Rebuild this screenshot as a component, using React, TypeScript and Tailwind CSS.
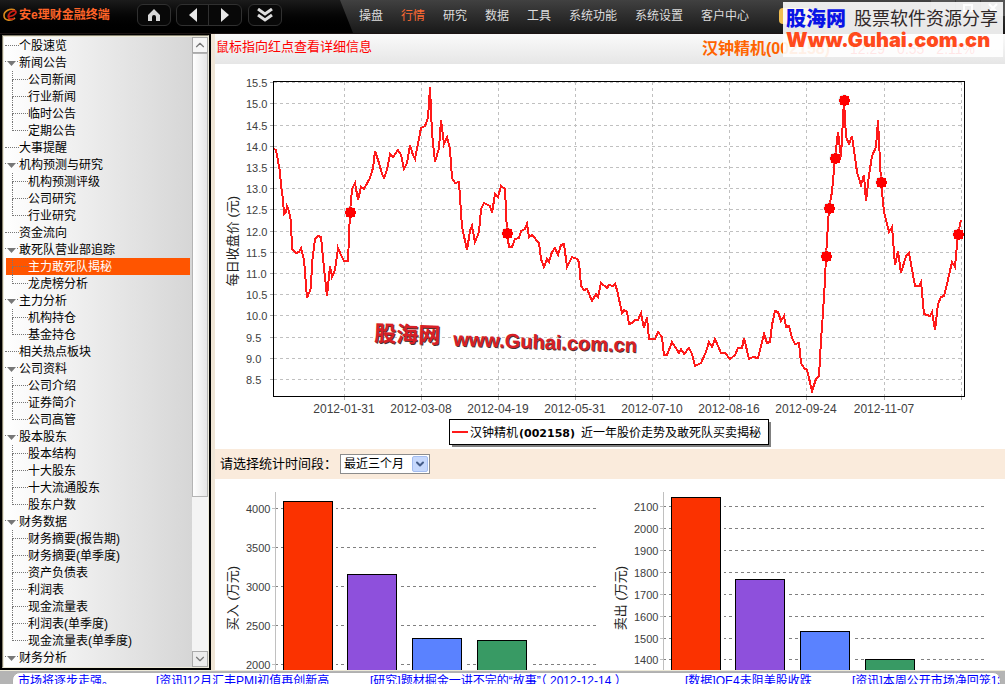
import type { ReactNode } from 'react'
import { ChevronDown, ChevronUp } from 'lucide-react'

interface TreeNode {
  label: string
  children?: string[]
}

const TREE: TreeNode[] = [
  { label: '个股速览' },
  { label: '新闻公告', children: ['公司新闻', '行业新闻', '临时公告', '定期公告'] },
  { label: '大事提醒' },
  { label: '机构预测与研究', children: ['机构预测评级', '公司研究', '行业研究'] },
  { label: '资金流向' },
  { label: '敢死队营业部追踪', children: ['主力敢死队揭秘', '龙虎榜分析'] },
  { label: '主力分析', children: ['机构持仓', '基金持仓'] },
  { label: '相关热点板块' },
  { label: '公司资料', children: ['公司介绍', '证券简介', '公司高管'] },
  { label: '股本股东', children: ['股本结构', '十大股东', '十大流通股东', '股东户数'] },
  {
    label: '财务数据',
    children: ['财务摘要(报告期)', '财务摘要(单季度)', '资产负债表', '利润表', '现金流量表', '利润表(单季度)', '现金流量表(单季度)'],
  },
  { label: '财务分析', children: [] },
]

const MENU = ['操盘', '行情', '研究', '数据', '工具', '系统功能', '系统设置', '客户中心']

const NEWS = [
  { text: '市场将逐步走强。', width: 'w-[138px]' },
  { text: '[资讯]12月汇丰PMI初值再创新高', width: 'w-[214px]' },
  { text: '[研究]题材掘金一讲不完的“故事”（ 2012-12-14 ）', width: 'w-[315px]' },
  { text: '[数据]QE4未阻美股收跌', width: 'w-[167px]' },
  { text: '[资讯]本周公开市场净回笼1320亿元', width: 'w-[200px]' },
]

// Chart coordinates, relative to the top left corner of the price chart
const PRICE_LINE =
  '59,85 61,86 65,108 66,121 68,136 69,150 71,148 72,142 74,147 76,158 77,185 81,189 84,188 86,184 89,196 92,234 96,224 97,199 100,175 103,172 106,173 109,204 112,232 115,202 117,213 120,206 123,184 126,191 129,197 133,197 135,148 137,125 140,119 143,136 146,123 149,125 155,114 158,104 160,87 164,99 167,110 169,114 172,106 175,90 178,93 183,86 186,91 189,105 192,99 195,81 198,91 200,95 206,64 210,62 213,54 215,23 217,69 220,98 224,84 226,56 229,80 232,73 235,85 237,114 240,119 244,118 247,163 252,186 255,167 257,162 260,178 264,168 266,145 269,139 275,142 277,149 280,130 283,133 286,122 290,125 292,169 294,183 297,183 300,175 304,174 306,167 310,165 312,160 314,173 317,171 324,179 326,195 329,203 332,195 334,198 337,188 340,184 343,191 346,181 349,180 352,203 355,197 357,193 362,195 364,198 366,222 369,226 372,225 377,237 381,230 383,233 386,219 392,224 394,221 398,222 400,220 402,226 407,249 409,246 412,248 414,260 417,259 420,256 423,256 426,249 429,264 432,253 434,275 440,275 443,268 447,273 449,291 452,291 457,278 464,289 466,285 469,290 474,284 477,290 480,302 486,299 491,288 494,278 497,283 500,275 506,289 510,289 515,295 520,291 523,284 527,284 529,274 534,295 538,293 543,294 547,278 549,270 552,279 555,278 557,261 560,247 563,248 566,257 569,252 571,263 574,262 577,274 580,280 584,279 586,299 589,304 592,306 597,327 601,315 604,312 606,276 608,249 610,216 611,192 614,144 617,128 620,94 623,68 626,93 629,36 631,73 634,80 637,72 642,108 646,121 649,111 651,137 654,111 657,92 661,83 663,56 666,118 669,148 674,168 677,163 680,201 683,187 686,209 691,192 694,189 700,222 704,222 706,218 709,250 715,252 717,248 720,266 723,240 726,233 729,232 732,220 737,198 740,203 743,170 746,156'

const MARKERS = [[135, 148], [292, 169], [611, 192], [614, 144], [620, 94], [629, 36], [666, 118], [743, 170]]

const PRICE_TICKS = [
  { label: '15.5', y: 18 },
  { label: '15.0', y: 39 },
  { label: '14.5', y: 61 },
  { label: '14.0', y: 82 },
  { label: '13.5', y: 103 },
  { label: '13.0', y: 124 },
  { label: '12.5', y: 145 },
  { label: '12.0', y: 167 },
  { label: '11.5', y: 188 },
  { label: '11.0', y: 209 },
  { label: '10.5', y: 230 },
  { label: '10.0', y: 251 },
  { label: '9.5', y: 273 },
  { label: '9.0', y: 294 },
  { label: '8.5', y: 315 },
]

const DATE_TICKS = [
  { label: '2012-01-31', x: 129 },
  { label: '2012-03-08', x: 206 },
  { label: '2012-04-19', x: 283 },
  { label: '2012-05-31', x: 360 },
  { label: '2012-07-10', x: 437 },
  { label: '2012-08-16', x: 514 },
  { label: '2012-09-24', x: 591 },
  { label: '2012-11-07', x: 669 },
  { label: '', x: 746 },
]

const BAR_COLORS = ['#fb3200', '#8e50dc', '#5a82ff', '#389a64']

function LogoMark() {
  return (
    <svg viewBox="0 0 16 16" className="h-4 w-4" aria-hidden="true">
      <path d="M12 3C7 1 1 4 1 8.500c0 5 6 6 11 2.500" fill="none" stroke="#d98a1c" strokeWidth="1.600" />
      <path d="M5 9.500c4 0 8-2 8-4.200 0-3-6-1.300-7.500 2.700C4.500 12 8 13 11 11.500" fill="none" stroke="#c81e14" strokeWidth="1.800" />
    </svg>
  )
}

function ToolButton({ label, className = '', children }: { label: string; className?: string; children: ReactNode }) {
  return (
    <button type="button" aria-label={label} className={`flex h-5 w-8 items-center justify-center ${className}`}>
      {children}
    </button>
  )
}

function Header() {
  return (
    <header className="flex h-[34px] shrink-0 border-b border-[#1c1414] bg-gradient-to-b from-[#1b1b1b] via-[#050505] to-black">
      <div className="flex w-[340px] shrink-0 items-center pb-[3px] pl-[3px]">
        <LogoMark />
        <span className="w-[118px] whitespace-nowrap text-xs font-bold text-[#ff6428]">安e理财金融终端</span>
        <div className="rounded-md border border-[#303030] bg-[#080808]">
          <ToolButton label="首页">
            <svg viewBox="0 0 14 13" className="h-[13px] w-3.5">
              <path d="M7 0 13 6v6H9V8a2 2 0 0 0-4 0v4H1V6z" fill="#d8d8d8" />
            </svg>
          </ToolButton>
        </div>
        <div className="ml-[5px] flex rounded-md border border-[#303030] bg-[#080808]">
          <ToolButton label="后退" className="border-r border-[#303030]">
            <svg viewBox="0 0 8 14" className="h-3.5 w-2">
              <path d="M8 0v14L0 7z" fill="#e8e8e8" />
            </svg>
          </ToolButton>
          <ToolButton label="前进">
            <svg viewBox="0 0 8 14" className="h-3.5 w-2">
              <path d="M0 0v14l8-7z" fill="#e8e8e8" />
            </svg>
          </ToolButton>
        </div>
        <div className="ml-[6px] rounded-md border border-[#303030] bg-[#080808]">
          <ToolButton label="展开">
            <svg viewBox="0 0 16 14" className="h-3.5 w-4" fill="none" stroke="#dedede" strokeWidth="3">
              <path d="M1 1l7 5 7-5M1 7l7 5 7-5" />
            </svg>
          </ToolButton>
        </div>
      </div>
      <nav className="flex min-w-0 flex-1 items-center bg-gradient-to-b from-[#414141] to-[#191919] pb-[2px] pl-[10px] [clip-path:polygon(0_0,100%_0,100%_100%,13px_100%)]">
        {MENU.map(item => (
          <a key={item} href="#" className={`whitespace-nowrap px-[9px] text-xs ${item === '行情' ? 'text-[#ff6a32]' : 'text-[#dcdcdc]'}`}>
            {item}
          </a>
        ))}
        <button type="button" aria-label="交易" className="ml-[21px] h-4 w-8 rounded-sm bg-[#f0bd50]" />
        <div className="mb-4 ml-auto flex gap-px">
          <button type="button" aria-label="最小化" className="h-4 w-6 bg-[#555]" />
          <button type="button" aria-label="最大化" className="flex h-4 w-6 items-center justify-center bg-[#555]">
            <span className="h-2 w-2.5 border-2 border-white" />
          </button>
          <button type="button" aria-label="关闭" className="flex h-4 w-6 items-center justify-center bg-[#555]">
            <svg viewBox="0 0 10 10" className="h-2.5 w-2.5" stroke="#fff" strokeWidth="2">
              <path d="M1 1l8 8M9 1 1 9" />
            </svg>
          </button>
        </div>
      </nav>
    </header>
  )
}

function Branch({ last }: { last: boolean }) {
  return (
    <span className="flex w-4 shrink-0 flex-col self-stretch">
      <span className="h-[9px] border-b border-l border-dotted border-[#777]" />
      <span className={`flex-1 border-dotted border-[#777] ${last ? '' : 'border-l'}`} />
    </span>
  )
}

function Sidebar() {
  return (
    <aside className="flex w-[211px] shrink-0 border-2 border-t border-black bg-[#ece9d8]">
      <div className="flex min-w-0 flex-1 border border-[#85806e] border-b-[#ece9d8] border-r-[#ece9d8] pt-px pl-px">
        <ul className="min-w-0 flex-1 overflow-hidden bg-gradient-to-r from-white to-[#d6d6d6] pl-px text-xs leading-[19px] text-black">
          {TREE.map(node => (
            <li key={node.label}>
              <button type="button" className="flex h-[17px] w-full items-center whitespace-nowrap">
                {node.children ? (
                  <svg viewBox="0 0 14 8" className="h-2 w-3.5 shrink-0">
                    <path d="M2 2h9L6.500 7z" fill="#777" />
                    <path d="M0 2.500h1M12 2.500h1" stroke="#777" />
                  </svg>
                ) : (
                  <span className="w-3.5 shrink-0 border-b border-dotted border-[#777]" />
                )}
                <span className="pt-px">{node.label}</span>
              </button>
              {node.children && (
                <ul className="mr-0.5 pl-px">
                  {node.children.map((child, i) => (
                    <li key={child}>
                      <button
                        type="button"
                        className={`flex h-[17px] w-full items-center whitespace-nowrap pl-1.5 ${child === '主力敢死队揭秘' ? 'bg-[#ff5500] text-white' : ''}`}
                      >
                        <Branch last={i === node.children!.length - 1} />
                        <span className="pt-px">{child}</span>
                      </button>
                    </li>
                  ))}
                </ul>
              )}
            </li>
          ))}
        </ul>
        <div className="flex w-4 shrink-0 flex-col bg-[#f4f4f4]">
          <button type="button" aria-label="向上滚动" className="flex h-4 items-center justify-center border border-[#aaa] bg-[#f6f6f6] text-[#777]">
            <ChevronUp size={14} className="shrink-0" />
          </button>
          <div className="flex-[443] border border-[#b4b4b4] bg-gradient-to-r from-white to-[#e6e6e6]" />
          <div className="flex-[155]" />
          <button type="button" aria-label="向下滚动" className="flex h-4 items-center justify-center border border-[#aaa] bg-[#ececec] text-[#777]">
            <ChevronDown size={14} className="shrink-0" />
          </button>
        </div>
      </div>
    </aside>
  )
}

function PriceChart() {
  return (
    <svg viewBox="0 0 790 385" className="block w-full" role="img" aria-label="近一年股价走势">
      <g stroke="#c0c0c0" strokeDasharray="3 3" shapeRendering="crispEdges">
        {PRICE_TICKS.map(t => (
          <line key={t.label} x1="59" x2="749" y1={t.y + 0.5} y2={t.y + 0.5} />
        ))}
        {DATE_TICKS.map(t => (
          <line key={t.x} x1={t.x + 0.5} x2={t.x + 0.5} y1="18" y2="332" />
        ))}
      </g>
      <g stroke="#aaa" shapeRendering="crispEdges">
        {PRICE_TICKS.map(t => (
          <line key={t.label} x1="55" x2="58" y1={t.y + 0.5} y2={t.y + 0.5} />
        ))}
        {DATE_TICKS.map(t => (
          <line key={t.x} x1={t.x + 0.5} x2={t.x + 0.5} y1="333" y2="336" />
        ))}
      </g>
      <rect x="58.5" y="17.500" width="691" height="315" fill="none" stroke="#000" shapeRendering="crispEdges" />
      <g fontSize="11" fill="#404040">
        {PRICE_TICKS.map(t => (
          <text key={t.label} x="31" y={t.y + 5}>{t.label}</text>
        ))}
      </g>
      <g fontSize="12" fill="#404040" textAnchor="middle">
        {DATE_TICKS.map(t => (
          <text key={t.x} x={t.x} y="349">{t.label}</text>
        ))}
      </g>
      <text transform="translate(22 177) rotate(-90)" textAnchor="middle" fontSize="13" fill="#222">每日收盘价 (元)</text>
      <polyline points={PRICE_LINE} fill="none" stroke="#ff1a1a" strokeWidth="2" shapeRendering="crispEdges" />
      {MARKERS.map(([x, y]) => (
        <g key={x}>
          <circle cx={x} cy={y} r="5.500" fill="#ddd" />
          <path d={`M${x - 4} ${y - 4}h3v-1h3v1h3v3h1v3h-1v3h-3v1h-3v-1h-3v-3h-1v-3h1z`} fill="#f00" />
        </g>
      ))}
      <g fontWeight="bold" transform="rotate(2 160 280)">
        <g fill="#4a3030" aria-hidden="true">
          <text x="160" y="278" fontSize="22">股海网</text>
          <text x="239" y="280" fontSize="20">www.Guhai.com.cn</text>
        </g>
        <g fill="#d81f26" transform="translate(-1 -1)">
          <text x="160" y="278" fontSize="22">股海网</text>
          <text x="239" y="280" fontSize="20">www.Guhai.com.cn</text>
        </g>
      </g>
      <rect x="237" y="358" width="319" height="25" fill="#808080" />
      <rect x="234.500" y="355.500" width="319" height="25" fill="#fff" stroke="#000" />
      <line x1="237" x2="253" y1="368" y2="368" stroke="#ff1a1a" strokeWidth="2" />
      <g fontSize="12" fill="#000">
        <text x="255" y="373">汉钟精机</text>
        <text x="304" y="373" fontSize="11" fontWeight="bold" fontFamily="DejaVu Sans">(002158)</text>
        <text x="366" y="373">近一年股价走势及敢死队买卖揭秘</text>
      </g>
    </svg>
  )
}

interface BarChartProps {
  title: string
  axisX: number
  ticks: { label: string; y: number }[]
  tops: number[]
}

function BarChart({ title, axisX, ticks, tops }: BarChartProps) {
  return (
    <svg viewBox="0 0 395 240" className="block min-w-0 flex-1" role="img" aria-label={title}>
      <g shapeRendering="crispEdges">
        {ticks.map(t => (
          <g key={t.label}>
            <line x1={axisX} x2={axisX + 322} y1={t.y + 0.5} y2={t.y + 0.5} stroke="#808080" strokeDasharray="3 3" />
            <line x1={axisX - 3} x2={axisX} y1={t.y + 0.5} y2={t.y + 0.5} stroke="#c0c0c0" />
          </g>
        ))}
        <line x1={axisX + 0.5} x2={axisX + 0.5} y1="13" y2="240" stroke="#c0c0c0" />
        {tops.map((top, i) => (
          <g key={i}>
            <rect x={axisX + 8 + Math.floor(i * 64.7)} y={top} width="53" height="240" fill="#fff" />
            <rect x={axisX + 8.5 + Math.floor(i * 64.7)} y={top + 0.5} width="49" height="240" fill={BAR_COLORS[i]} stroke="#000" />
          </g>
        ))}
      </g>
      <g fontSize="11" fill="#404040">
        {ticks.map(t => (
          <text key={t.label} x={axisX - 29} y={t.y + 5}>{t.label}</text>
        ))}
      </g>
      <text transform={`translate(${axisX - 38} 119) rotate(-90)`} textAnchor="middle" fontSize="13" fill="#222">{title}</text>
    </svg>
  )
}

function Watermark() {
  return (
    <div className="absolute right-0.5 top-0.5 h-[55px] w-[220px] bg-white/90 pl-[3px]">
      <div className="flex items-center gap-2 whitespace-nowrap pt-1">
        <span className="text-xl leading-[26px] font-black text-[#0a14e6]">股海网</span>
        <span className="text-lg leading-[26px] text-[#302828]">股票软件资源分享</span>
      </div>
      <p className="whitespace-nowrap font-['Inter'] text-xl leading-4 font-black text-[#ff4a1c]">Www.Guhai.com.cn</p>
    </div>
  )
}

export default function App() {
  return (
    <div className="relative flex h-screen flex-col overflow-hidden bg-white font-['Liberation_Sans','Noto_Sans_CJK_SC',sans-serif]">
      <Header />
      <div className="flex min-h-0 flex-1">
        <Sidebar />
        <main className="flex min-w-0 flex-1 flex-col overflow-hidden border-l-4 border-[#efe5d6]">
          <div className="flex h-[30px] shrink-0 items-center bg-gradient-to-b from-[#fafafa] to-[#e6e6e6] pl-px">
            <p className="flex-1 pb-1 text-[13px] text-[#ff0000]">鼠标指向红点查看详细信息</p>
            <p className="w-[303px] shrink-0 whitespace-nowrap text-base font-bold text-[#ff6400]">
              汉钟精机(002158)
              <span className="ml-5 text-sm font-normal text-[#ff0000]">12.29</span>
              <span className="ml-3 text-sm font-normal text-[#ff0000]">0.55</span>
              <span className="ml-3 text-sm font-normal text-[#ff0000]">2.11%</span>
            </p>
          </div>
          <div className="shrink-0">
            <PriceChart />
          </div>
          <div className="flex h-[30px] shrink-0 items-center bg-[#faebdc] pl-[5px]">
            <label htmlFor="period" className="w-[120px] whitespace-nowrap text-[13px] text-black">请选择统计时间段：</label>
            <div className="relative flex">
              <select id="period" className="h-5 w-[90px] appearance-none border border-[#8c8c8c] bg-white pl-[3px] text-xs leading-4 text-black">
                <option>最近三个月</option>
                <option>最近六个月</option>
                <option>最近一年</option>
              </select>
              <span className="pointer-events-none absolute right-0.5 top-0.5 flex h-4 w-4 items-center justify-center rounded-xs border border-[#a4bdf0] bg-[#c6d8fc] text-[#445c88]">
                <ChevronDown size={12} strokeWidth={4} />
              </span>
            </div>
          </div>
          <div className="flex shrink-0">
            <BarChart
              title="买入 (万元)"
              axisX={60}
              ticks={[
                { label: '4000', y: 29 },
                { label: '3500', y: 68 },
                { label: '3000', y: 107 },
                { label: '2500', y: 146 },
                { label: '2000', y: 185 },
              ]}
              tops={[22, 95, 159, 161]}
            />
            <BarChart
              title="卖出 (万元)"
              axisX={53}
              ticks={[
                { label: '2100', y: 27 },
                { label: '2000', y: 49 },
                { label: '1900', y: 71 },
                { label: '1800', y: 93 },
                { label: '1700', y: 115 },
                { label: '1600', y: 137 },
                { label: '1500', y: 159 },
                { label: '1400', y: 180 },
              ]}
              tops={[18, 100, 152, 180]}
            />
          </div>
        </main>
      </div>
      <footer className="h-3.5 shrink-0 overflow-hidden border-t border-[#ece9d8] bg-[#b4b4b4] pt-px pr-1 pl-3">
        <div className="flex h-6 overflow-hidden rounded-lg border border-[#b0b0b0] bg-white pl-[5px] text-xs leading-[17px]">
          {NEWS.map(item => (
            <a key={item.text} href="#" className={`shrink-0 whitespace-nowrap text-[#0000ff] ${item.width}`}>
              {item.text}
            </a>
          ))}
        </div>
      </footer>
      <Watermark />
    </div>
  )
}
